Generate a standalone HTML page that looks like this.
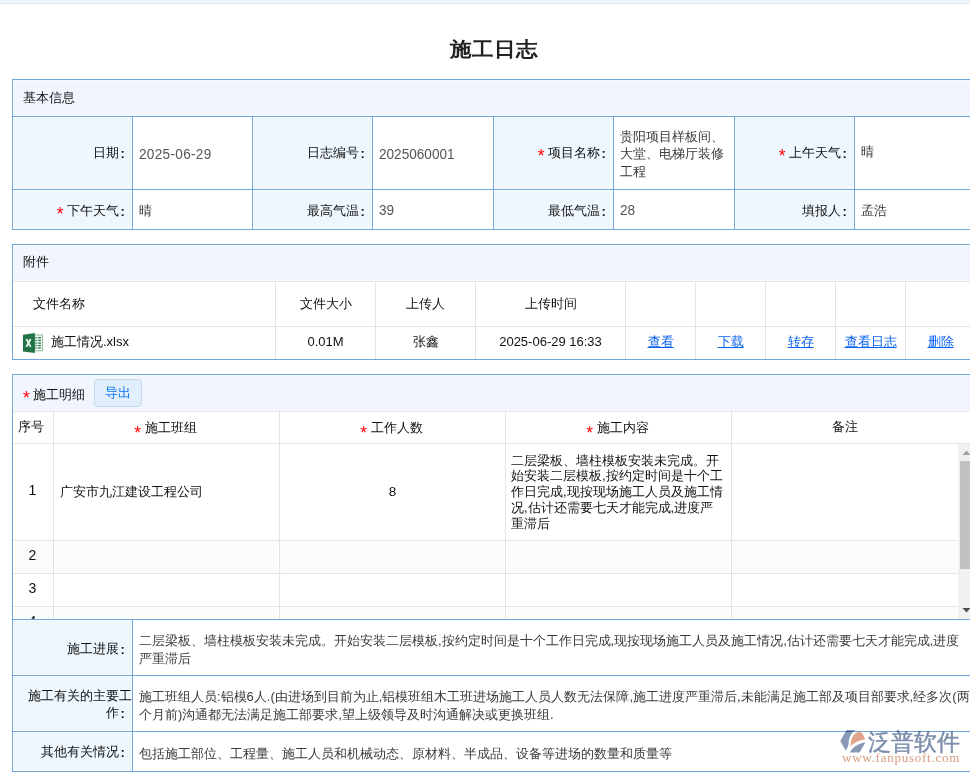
<!DOCTYPE html>
<html><head><meta charset="utf-8"><style>
html,body{margin:0;padding:0;background:#fff;width:970px;height:774px;overflow:hidden;}
body{position:relative;font-family:"Liberation Sans",sans-serif;font-size:13px;color:#333;}
body>div{position:absolute;box-sizing:border-box;}
.title{left:12px;top:35.5px;transform:scaleY(0.93);transform-origin:50% 0;width:963px;text-align:center;font-size:22px;font-weight:bold;line-height:28px;color:#222;height:28px}
.t{color:#111;font-size:13px;white-space:nowrap}
.lab{display:flex;align-items:center;justify-content:flex-end;text-align:right;color:#111;line-height:17px;padding-right:0}
.lab .col{display:inline-block;width:13px;text-align:left;padding-left:1.5px;box-sizing:border-box;font-weight:bold;position:relative;top:1px}
.req{color:#f00;margin-right:3.5px;font-size:17.5px;position:relative;top:5px;line-height:10px}
.val{display:flex;align-items:center;color:#3a3a3a;line-height:17.3px;padding-left:6px}
.num{color:#555;font-size:13.6px;display:inline-block;transform:scaleY(1.12);position:relative;top:1.5px}
.cc{display:flex;align-items:center;justify-content:center;text-align:center;line-height:17px;color:#111}
.cl{display:flex;align-items:center;line-height:17px;color:#111}
a{color:#0a64f0;text-decoration:underline}
.btn{background:#e1eefb;border:1px solid #c6d9ea;border-radius:4px;color:#0874f2;display:flex;align-items:center;justify-content:center;line-height:17px}
.xls{display:block;flex:none}
.wm1{mix-blend-mode:multiply;left:867.5px;top:726.5px;font-size:23px;line-height:30px;font-weight:normal;color:#7f90ae;-webkit-text-stroke:0.5px #7f90ae;white-space:nowrap}
.wm2{mix-blend-mode:multiply;left:842px;top:750px;font-family:"Liberation Serif",serif;font-size:13px;line-height:15px;letter-spacing:0.75px;color:#d99c80;white-space:nowrap}
.in{display:block}
.lab .in{text-align:right}
</style></head><body>
<div style="left:0px;top:0px;width:970px;height:3px;background:#f0f5fd"></div>
<div style="left:0px;top:3px;width:970px;height:1px;background:#e5eaf2"></div>
<div style="left:0px;top:4px;width:970px;height:1px;background:#fafbfc"></div>
<div class="title">施工日志</div>
<div style="left:13px;top:80px;width:962px;height:36px;background:#f0f5fe;box-shadow:inset 0 0 0 1px #f9fcff"></div>
<div style="left:13px;top:117px;width:119px;height:72px;background:#eff7fe;box-shadow:inset 0 0 0 1px #f9fcff"></div>
<div style="left:253px;top:117px;width:119px;height:72px;background:#eff7fe;box-shadow:inset 0 0 0 1px #f9fcff"></div>
<div style="left:494px;top:117px;width:119px;height:72px;background:#eff7fe;box-shadow:inset 0 0 0 1px #f9fcff"></div>
<div style="left:735px;top:117px;width:119px;height:72px;background:#eff7fe;box-shadow:inset 0 0 0 1px #f9fcff"></div>
<div style="left:13px;top:190px;width:119px;height:39px;background:#eff7fe;box-shadow:inset 0 0 0 1px #f9fcff"></div>
<div style="left:253px;top:190px;width:119px;height:39px;background:#eff7fe;box-shadow:inset 0 0 0 1px #f9fcff"></div>
<div style="left:494px;top:190px;width:119px;height:39px;background:#eff7fe;box-shadow:inset 0 0 0 1px #f9fcff"></div>
<div style="left:735px;top:190px;width:119px;height:39px;background:#eff7fe;box-shadow:inset 0 0 0 1px #f9fcff"></div>
<div style="left:12px;top:79px;width:963px;height:1px;background:#70a8dc"></div>
<div style="left:12px;top:116px;width:963px;height:1px;background:#70a8dc"></div>
<div style="left:12px;top:189px;width:963px;height:1px;background:#70a8dc"></div>
<div style="left:12px;top:229px;width:963px;height:1px;background:#70a8dc"></div>
<div style="left:12px;top:79px;width:1px;height:151px;background:#70a8dc"></div>
<div style="left:132px;top:116px;width:1px;height:114px;background:#70a8dc"></div>
<div style="left:252px;top:116px;width:1px;height:114px;background:#70a8dc"></div>
<div style="left:372px;top:116px;width:1px;height:114px;background:#70a8dc"></div>
<div style="left:493px;top:116px;width:1px;height:114px;background:#70a8dc"></div>
<div style="left:613px;top:116px;width:1px;height:114px;background:#70a8dc"></div>
<div style="left:734px;top:116px;width:1px;height:114px;background:#70a8dc"></div>
<div style="left:854px;top:116px;width:1px;height:114px;background:#70a8dc"></div>
<div class="t" style="left:23px;top:89px;line-height:17px">基本信息</div>
<div class="lab" style="left:13px;top:116px;width:119px;height:72px"><span class="in">日期<span class="col">:</span></span></div>
<div class="val" style="left:133px;top:116px;width:119px;height:72px;"><span class=num style="letter-spacing:0.3px">2025-06-29</span></div>
<div class="lab" style="left:253px;top:116px;width:119px;height:72px"><span class="in">日志编号<span class="col">:</span></span></div>
<div class="val" style="left:373px;top:116px;width:120px;height:72px;"><span class=num>2025060001</span></div>
<div class="lab" style="left:494px;top:116px;width:119px;height:72px"><span class="in"><span class="req">*</span>项目名称<span class="col">:</span></span></div>
<div class="val" style="left:614px;top:116px;width:120px;height:72px;padding-top:4px">贵阳项目样板间、<br>大堂、电梯厅装修<br>工程</div>
<div class="lab" style="left:735px;top:116px;width:119px;height:72px"><span class="in"><span class="req">*</span>上午天气<span class="col">:</span></span></div>
<div class="val" style="left:855px;top:116px;width:120px;height:72px;">晴</div>
<div class="lab" style="left:13px;top:191px;width:119px;height:39px"><span class="in"><span class="req">*</span>下午天气<span class="col">:</span></span></div>
<div class="val" style="left:133px;top:191px;width:119px;height:39px;">晴</div>
<div class="lab" style="left:253px;top:191px;width:119px;height:39px"><span class="in">最高气温<span class="col">:</span></span></div>
<div class="val" style="left:373px;top:191px;width:120px;height:39px;"><span class=num style="top:-0.5px">39</span></div>
<div class="lab" style="left:494px;top:191px;width:119px;height:39px"><span class="in">最低气温<span class="col">:</span></span></div>
<div class="val" style="left:614px;top:191px;width:120px;height:39px;"><span class=num style="top:-0.5px">28</span></div>
<div class="lab" style="left:735px;top:191px;width:119px;height:39px"><span class="in">填报人<span class="col">:</span></span></div>
<div class="val" style="left:855px;top:191px;width:120px;height:39px;">孟浩</div>
<div style="left:13px;top:245px;width:962px;height:36px;background:#f0f5fe;box-shadow:inset 0 0 0 1px #f9fcff"></div>
<div style="left:12px;top:244px;width:963px;height:1px;background:#70a8dc"></div>
<div style="left:12px;top:359px;width:963px;height:1px;background:#70a8dc"></div>
<div style="left:12px;top:244px;width:1px;height:116px;background:#70a8dc"></div>
<div style="left:13px;top:281px;width:962px;height:1px;background:#e4e4e4"></div>
<div style="left:13px;top:326px;width:962px;height:1px;background:#e4e4e4"></div>
<div style="left:275px;top:282px;width:1px;height:77px;background:#e4e4e4"></div>
<div style="left:375px;top:282px;width:1px;height:77px;background:#e4e4e4"></div>
<div style="left:475px;top:282px;width:1px;height:77px;background:#e4e4e4"></div>
<div style="left:625px;top:282px;width:1px;height:77px;background:#e4e4e4"></div>
<div style="left:695px;top:282px;width:1px;height:77px;background:#e4e4e4"></div>
<div style="left:765px;top:282px;width:1px;height:77px;background:#e4e4e4"></div>
<div style="left:835px;top:282px;width:1px;height:77px;background:#e4e4e4"></div>
<div style="left:905px;top:282px;width:1px;height:77px;background:#e4e4e4"></div>
<div class="t" style="left:23px;top:253px;line-height:17px">附件</div>
<div class="cl" style="left:13px;top:282px;width:262px;height:44px;padding-left:20px;padding-bottom:1.5px">文件名称</div>
<div class="cc" style="left:276px;top:282px;width:99px;height:44px;padding-bottom:1.5px">文件大小</div>
<div class="cc" style="left:376px;top:282px;width:99px;height:44px;padding-bottom:1.5px">上传人</div>
<div class="cc" style="left:476px;top:282px;width:149px;height:44px;padding-bottom:1.5px">上传时间</div>
<div class="cl" style="left:13px;top:327px;width:262px;height:32px;padding-left:10px"><svg class="xls" width="21" height="21" viewBox="0 0 21 21"><rect x="11.5" y="2" width="8" height="15.8" fill="#f4f9f6" stroke="#8fbca2" stroke-width="1"/><g fill="#2a7b4e"><rect x="15.1" y="4" width="2.8" height="1.4"/><rect x="15.1" y="6.7" width="2.8" height="1.4"/><rect x="15.1" y="9.4" width="2.8" height="1.4"/><rect x="15.1" y="11.9" width="2.8" height="1.3"/><rect x="15.1" y="14.3" width="2.8" height="1.3"/></g><g fill="#5e9d79"><rect x="11.5" y="4" width="2.8" height="1.4"/><rect x="11.5" y="6.7" width="2.8" height="1.4"/><rect x="11.5" y="9.4" width="2.8" height="1.4"/><rect x="11.5" y="11.9" width="2.8" height="1.3"/><rect x="11.5" y="14.3" width="2.8" height="1.3"/></g><path d="M0 1.7 L11.8 0 V19.9 L0 18.5 Z" fill="#217346"/><path d="M3.3 6 L7.7 13.8 M7.7 6 L3.3 13.8" stroke="#f2f8f4" stroke-width="1.7"/></svg><span style="margin-left:7px;font-size:13px;position:relative;top:-2px">施工情况.xlsx</span></div>
<div class="cc" style="left:276px;top:327px;width:99px;height:32px;padding-bottom:3px">0.01M</div>
<div class="cc" style="left:376px;top:327px;width:99px;height:32px;padding-bottom:3px">张鑫</div>
<div class="cc" style="left:476px;top:327px;width:149px;height:32px;padding-bottom:3px">2025-06-29 16:33</div>
<div class="cc" style="left:626px;top:327px;width:69px;height:32px;padding-bottom:3px"><a>查看</a></div>
<div class="cc" style="left:696px;top:327px;width:69px;height:32px;padding-bottom:3px"><a>下载</a></div>
<div class="cc" style="left:766px;top:327px;width:69px;height:32px;padding-bottom:3px"><a>转存</a></div>
<div class="cc" style="left:836px;top:327px;width:69px;height:32px;padding-bottom:3px"><a>查看日志</a></div>
<div class="cc" style="left:906px;top:327px;width:69px;height:32px;padding-bottom:3px"><a>删除</a></div>
<div style="left:13px;top:375px;width:962px;height:36px;background:#f0f5fe;box-shadow:inset 0 0 0 1px #f9fcff"></div>
<div style="left:12px;top:374px;width:963px;height:1px;background:#70a8dc"></div>
<div style="left:12px;top:374px;width:1px;height:246px;background:#70a8dc"></div>
<div class="t" style="left:23px;top:385.5px;line-height:17px"><span class="req">*</span>施工明细</div>
<div class="btn" style="left:94px;top:379px;width:48px;height:28px;padding-bottom:2px">导出</div>
<div style="left:13px;top:411px;width:962px;height:1px;background:#e4e4e4"></div>
<div style="left:13px;top:443px;width:962px;height:1px;background:#e4e4e4"></div>
<div style="left:53px;top:412px;width:1px;height:207px;background:#e4e4e4"></div>
<div style="left:279px;top:412px;width:1px;height:207px;background:#e4e4e4"></div>
<div style="left:505px;top:412px;width:1px;height:207px;background:#e4e4e4"></div>
<div style="left:731px;top:412px;width:1px;height:207px;background:#e4e4e4"></div>
<div class="cc" style="left:13px;top:412px;width:40px;height:31px;padding-bottom:2px;padding-right:4px">序号</div>
<div class="cc" style="left:54px;top:412px;width:225px;height:31px;padding-right:2px"><span class="req">*</span>施工班组</div>
<div class="cc" style="left:280px;top:412px;width:225px;height:31px;padding-right:2px"><span class="req">*</span>工作人数</div>
<div class="cc" style="left:506px;top:412px;width:225px;height:31px;padding-right:2px"><span class="req">*</span>施工内容</div>
<div class="cc" style="left:732px;top:412px;width:243px;height:31px;padding-bottom:2px;box-sizing:border-box;width:226px">备注</div>
<div style="left:13px;top:541px;width:40px;height:32px;background:#fbfbfb;box-shadow:inset 0 0 0 1px #fff"></div>
<div style="left:54px;top:541px;width:225px;height:32px;background:#fbfbfb;box-shadow:inset 0 0 0 1px #fff"></div>
<div style="left:280px;top:541px;width:225px;height:32px;background:#fbfbfb;box-shadow:inset 0 0 0 1px #fff"></div>
<div style="left:506px;top:541px;width:225px;height:32px;background:#fbfbfb;box-shadow:inset 0 0 0 1px #fff"></div>
<div style="left:732px;top:541px;width:226px;height:32px;background:#fbfbfb;box-shadow:inset 0 0 0 1px #fff"></div>
<div style="left:13px;top:540px;width:945px;height:1px;background:#e4e4e4"></div>
<div style="left:13px;top:573px;width:945px;height:1px;background:#e4e4e4"></div>
<div style="left:13px;top:607px;width:40px;height:12px;background:#fbfbfb;box-shadow:inset 0 0 0 1px #fff"></div>
<div style="left:54px;top:607px;width:225px;height:12px;background:#fbfbfb;box-shadow:inset 0 0 0 1px #fff"></div>
<div style="left:280px;top:607px;width:225px;height:12px;background:#fbfbfb;box-shadow:inset 0 0 0 1px #fff"></div>
<div style="left:506px;top:607px;width:225px;height:12px;background:#fbfbfb;box-shadow:inset 0 0 0 1px #fff"></div>
<div style="left:732px;top:607px;width:226px;height:12px;background:#fbfbfb;box-shadow:inset 0 0 0 1px #fff"></div>
<div style="left:13px;top:606px;width:945px;height:1px;background:#e4e4e4"></div>
<div class="cc" style="left:13px;top:444px;width:40px;height:96px;padding-bottom:3px;padding-right:1px;font-size:14px">1</div>
<div class="cl" style="left:54px;top:444px;width:225px;height:96px;padding-left:6px;padding-bottom:2px">广安市九江建设工程公司</div>
<div class="cc" style="left:280px;top:444px;width:225px;height:96px;padding-bottom:1px;font-size:13.5px">8</div>
<div class="cl" style="left:506px;top:444px;width:225px;height:96px;padding-left:5px;line-height:15.8px">二层梁板、墙柱模板安装未完成。开<br>始安装二层模板,按约定时间是十个工<br>作日完成,现按现场施工人员及施工情<br>况,估计还需要七天才能完成,进度严<br>重滞后</div>
<div class="cc" style="left:13px;top:541px;width:40px;height:32px;padding-bottom:3px;padding-right:1px;font-size:14px">2</div>
<div class="cc" style="left:13px;top:574px;width:40px;height:32px;padding-bottom:3px;padding-right:1px;font-size:14px">3</div>
<div class="cc" style="left:13px;top:607px;width:40px;height:32px;padding-bottom:3px;padding-right:1px;font-size:14px">4</div>
<div style="left:958px;top:444px;width:17px;height:175px;background:#f1f1f1"></div>
<div style="left:960px;top:461px;width:13px;height:108px;background:#c1c1c1"></div>
<svg style="position:absolute;left:958px;top:444px" width="17" height="17"><path d="M4.5 11 L8.5 6.5 L12.5 11 Z" fill="#a3a3a3"/></svg>
<svg style="position:absolute;left:958px;top:602px" width="17" height="17"><path d="M4.5 6 L8.5 10.5 L12.5 6 Z" fill="#505050"/></svg>
<div style="left:13px;top:620px;width:962px;height:151px;background:#fff"></div>
<div style="left:13px;top:620px;width:119px;height:55px;background:#eff7fe;box-shadow:inset 0 0 0 1px #f9fcff"></div>
<div style="left:13px;top:676px;width:119px;height:55px;background:#eff7fe;box-shadow:inset 0 0 0 1px #f9fcff"></div>
<div style="left:13px;top:732px;width:119px;height:39px;background:#eff7fe;box-shadow:inset 0 0 0 1px #f9fcff"></div>
<div style="left:12px;top:619px;width:963px;height:1px;background:#70a8dc"></div>
<div style="left:12px;top:675px;width:963px;height:1px;background:#70a8dc"></div>
<div style="left:12px;top:731px;width:963px;height:1px;background:#70a8dc"></div>
<div style="left:12px;top:771px;width:963px;height:1px;background:#70a8dc"></div>
<div style="left:12px;top:619px;width:1px;height:153px;background:#70a8dc"></div>
<div style="left:132px;top:619px;width:1px;height:153px;background:#70a8dc"></div>
<div class="lab" style="left:13px;top:621px;width:119px;height:55px"><span class="in">施工进展<span class="col">:</span></span></div>
<div class="lab" style="left:13px;top:676px;width:119px;height:55px"><span class="in">施工有关的主要工<br>作<span class="col">:</span></span></div>
<div class="lab" style="left:13px;top:732px;width:119px;height:39px"><span class="in">其他有关情况<span class="col">:</span></span></div>
<div class="val" style="left:133px;top:622px;width:842px;height:55px;">二层梁板、墙柱模板安装未完成。开始安装二层模板,按约定时间是十个工作日完成,现按现场施工人员及施工情况,估计还需要七天才能完成,进度<br>严重滞后</div>
<div class="val" style="left:133px;top:678px;width:842px;height:55px;">施工班组人员:铝模6人.(由进场到目前为止,铝模班组木工班进场施工人员人数无法保障,施工进度严重滞后,未能满足施工部及项目部要求,经多次(两<br>个月前)沟通都无法满足施工部要求,望上级领导及时沟通解决或更换班组.</div>
<div class="val" style="left:133px;top:734px;width:842px;height:39px;">包括施工部位、工程量、施工人员和机械动态、原材料、半成品、设备等进场的数量和质量等</div>
<svg style="position:absolute;left:836px;top:726px;mix-blend-mode:multiply" width="130" height="40" viewBox="0 0 130 40">
<path d="M10.5 4.1 L19.8 4.1 C16 6 12.8 11 12.6 17.5 C12.5 20 11 23 9.7 24.4 L4.3 15.1 Z" fill="#8a9ab6"/>
<path d="M14.7 20.2 C14.5 12 18 6.5 23.3 5.8 C26.5 6.5 28.5 10.5 29.1 13.6 C23 14 18 17 14.7 20.2 Z" fill="#e0a48a"/>
<path d="M29.5 16.3 L23.6 26.4 L14 26.4 C16 21.5 22 17.5 29.5 16.3 Z" fill="#8a9ab6"/>
</svg>
<div class="wm1">泛普软件</div><div class="wm2">www.fanpusoft.com</div>
</body></html>
